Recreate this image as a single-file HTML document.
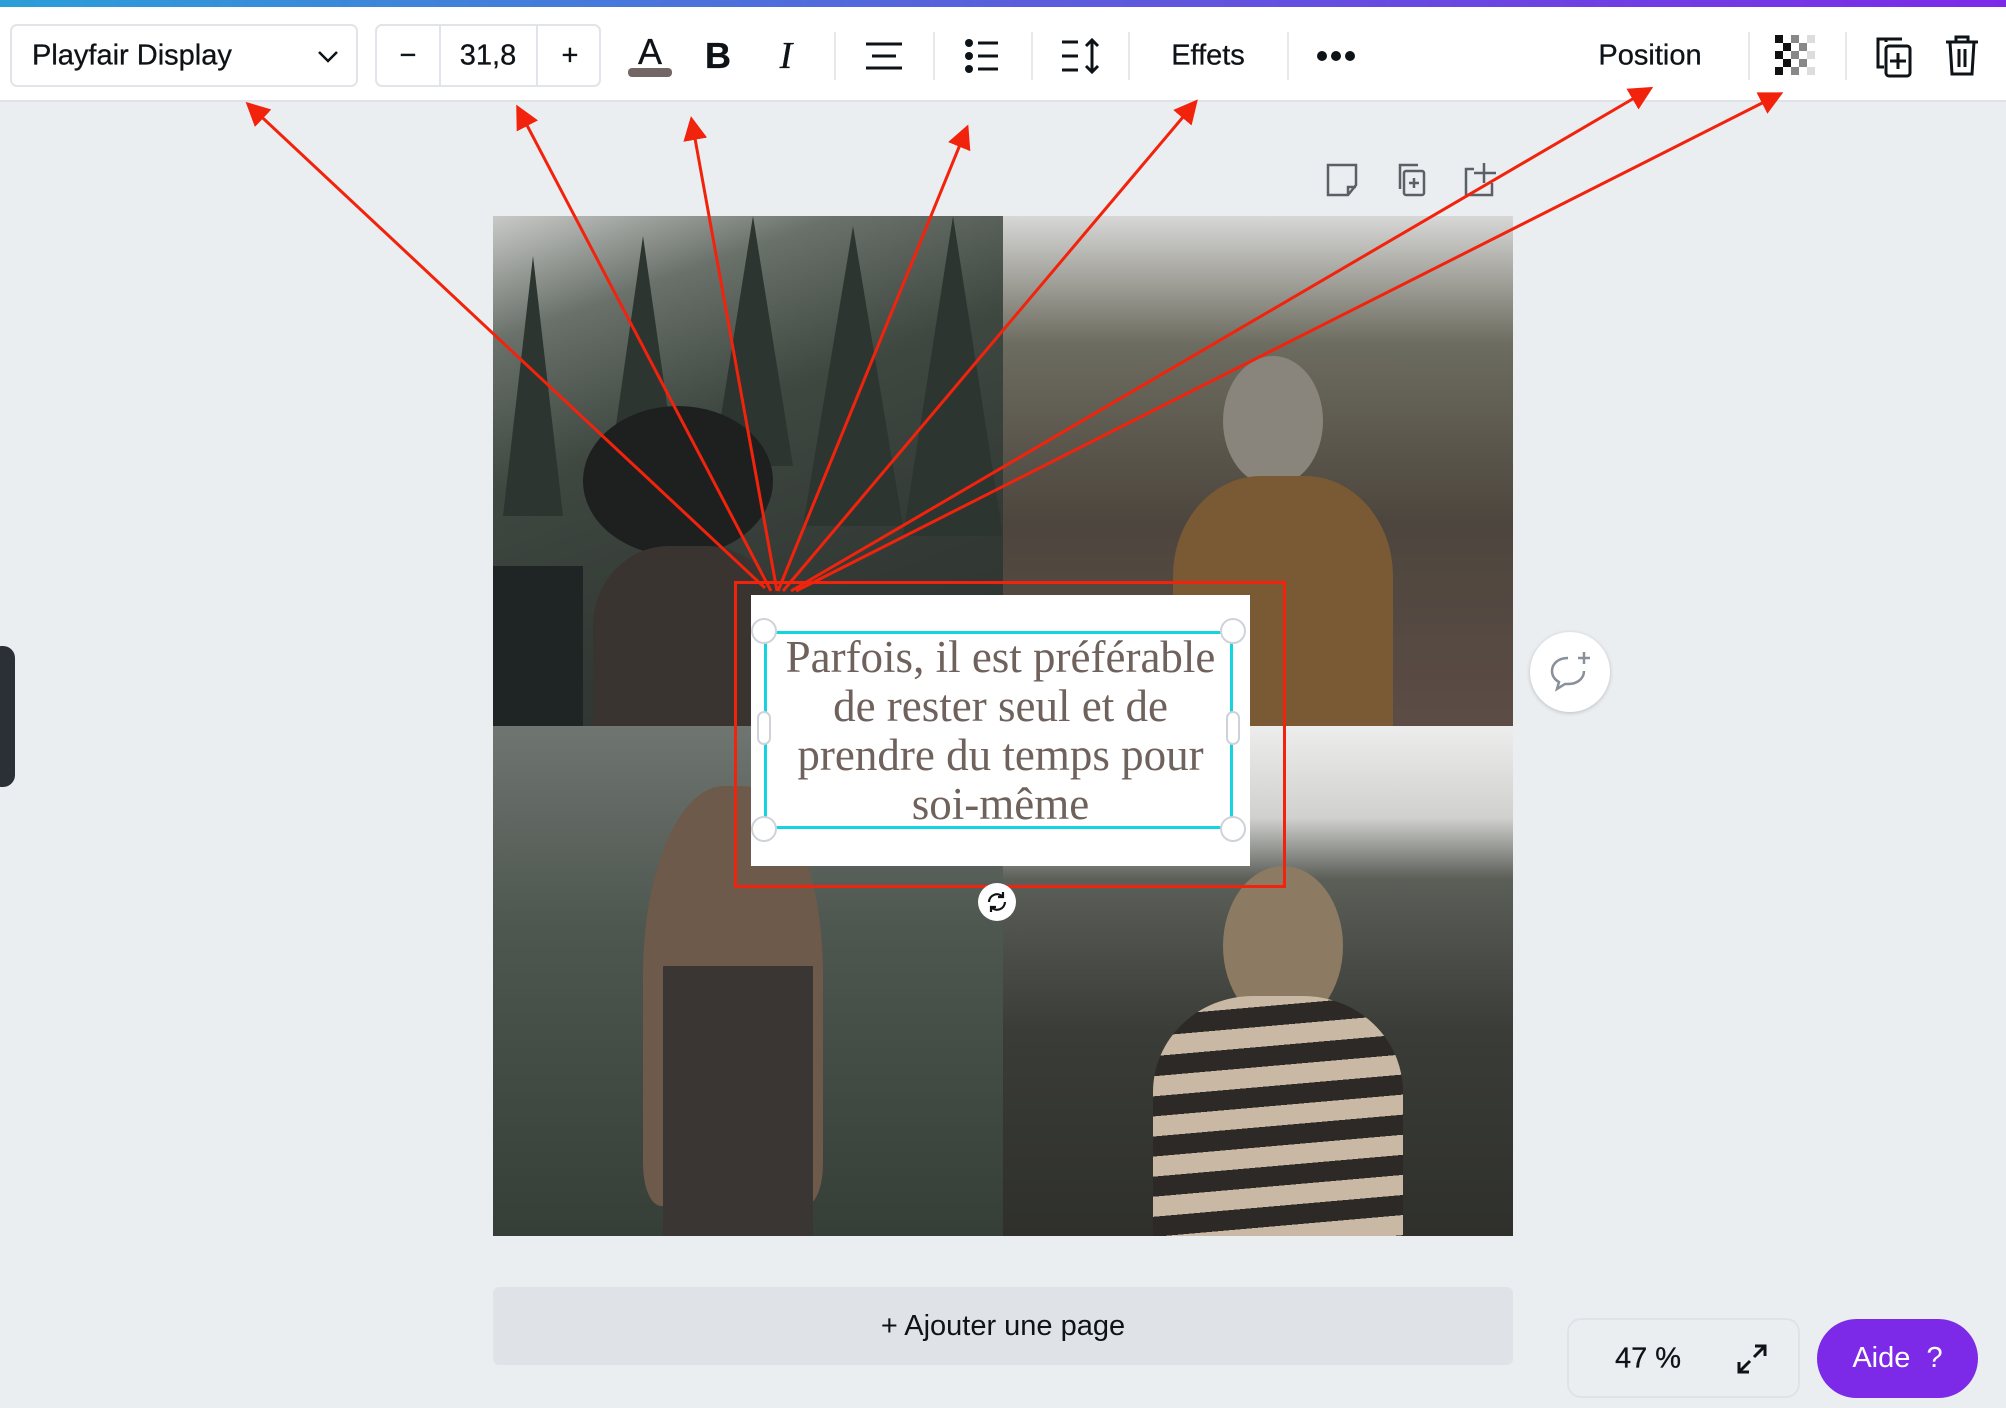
<!DOCTYPE html>
<html><head><meta charset="utf-8"><style>
*{margin:0;padding:0;box-sizing:border-box}
body{width:2006px;height:1408px;overflow:hidden;background:#ebeef1;font-family:"Liberation Sans",sans-serif;position:relative;color:#0e1318}
.abs{position:absolute}
.top{left:0;top:0;width:2006px;height:7px;background:linear-gradient(90deg,#2b9ed9,#5a5fdc 50%,#7d2ae8)}
.tb{left:0;top:7px;width:2006px;height:95px;background:#fff;border-bottom:2px solid #dfe3e8}
.t{position:absolute;font-size:29px;line-height:1;transform:translate(-50%,-50%);top:56px;white-space:nowrap;-webkit-text-stroke:0.3px #0e1318}
.sep{position:absolute;top:32px;width:2px;height:48px;background:#e6e8eb}
.box{border:2px solid #e1e4e8;border-radius:7px;background:#fff}
.q{position:absolute;width:510px;height:510px;overflow:hidden}
.h{position:absolute;width:26px;height:26px;border-radius:50%;background:#fff;border:2px solid #cfd3d9;transform:translate(-50%,-50%)}
</style></head><body>
<div class="abs top"></div>
<div class="abs tb"></div>
<div class="abs box" style="left:10px;top:24px;width:348px;height:63px"></div>
<div class="t" style="left:32px;transform:translateY(-50%)">Playfair Display</div>
<svg class="abs" style="left:316px;top:48px" width="24" height="16"><path d="M3 4l9 9 9-9" fill="none" stroke="#0e1318" stroke-width="2.5"/></svg>
<div class="abs box" style="left:375px;top:24px;width:226px;height:63px"></div>
<div class="abs" style="left:439px;top:25px;width:2px;height:61px;background:#e1e4e8"></div>
<div class="abs" style="left:536px;top:25px;width:2px;height:61px;background:#e1e4e8"></div>
<div class="t" style="left:408px">−</div>
<div class="t" style="left:488px">31,8</div>
<div class="t" style="left:570px">+</div>
<div class="t" style="left:650px;top:52px;font-size:36px">A</div>
<div class="abs" style="left:628px;top:68px;width:44px;height:9px;border-radius:4px;background:#726764"></div>
<div class="t" style="left:718px;font-weight:bold;font-size:36px">B</div>
<div class="t" style="left:786px;font-style:italic;font-family:'Liberation Serif',serif;font-size:38px">I</div>
<div class="sep" style="left:834px"></div>
<svg class="abs" style="left:864px;top:40px" width="40" height="32"><path d="M2 4h36M8 16h24M2 28h36" stroke="#0e1318" stroke-width="3"/></svg>
<div class="sep" style="left:933px"></div>
<svg class="abs" style="left:964px;top:38px" width="36" height="36"><g fill="#0e1318"><circle cx="5" cy="5" r="4"/><circle cx="5" cy="18" r="4"/><circle cx="5" cy="31" r="4"/></g><path d="M14 5h20M14 18h20M14 31h20" stroke="#0e1318" stroke-width="3"/></svg>
<div class="sep" style="left:1031px"></div>
<svg class="abs" style="left:1060px;top:37px" width="42" height="38"><path d="M2 5h16M2 19h16M2 33h16M32 3v32M26 9l6-6 6 6M26 29l6 6 6-6" fill="none" stroke="#0e1318" stroke-width="3"/></svg>
<div class="sep" style="left:1128px"></div>
<div class="t" style="left:1208px">Effets</div>
<div class="sep" style="left:1287px"></div>
<svg class="abs" style="left:1316px;top:50px" width="40" height="12"><g fill="#0e1318"><circle cx="6" cy="6" r="5"/><circle cx="20" cy="6" r="5"/><circle cx="34" cy="6" r="5"/></g></svg>
<div class="t" style="left:1650px">Position</div>
<div class="sep" style="left:1748px"></div>
<svg class="abs" style="left:1775px;top:35px" width="42" height="42"><g fill="#111"><rect x="0" y="0" width="8" height="8"/><rect x="0" y="16" width="8" height="8"/><rect x="0" y="32" width="8" height="8"/><rect x="8" y="8" width="8" height="8"/><rect x="8" y="24" width="8" height="8"/></g><g fill="#888"><rect x="16" y="0" width="8" height="8"/><rect x="16" y="16" width="8" height="8"/><rect x="16" y="32" width="8" height="8"/><rect x="24" y="8" width="8" height="8"/><rect x="24" y="24" width="8" height="8"/></g><g fill="#ddd"><rect x="32" y="0" width="8" height="8"/><rect x="32" y="16" width="8" height="8"/><rect x="32" y="32" width="8" height="8"/></g></svg>
<div class="sep" style="left:1845px"></div>
<svg class="abs" style="left:1874px;top:36px" width="40" height="42"><path d="M12 6V3h16M12 3H4v28h6" fill="none" stroke="#0e1318" stroke-width="3"/><rect x="12" y="10" width="24" height="30" rx="3" fill="none" stroke="#0e1318" stroke-width="3"/><path d="M24 17v16M16 25h16" stroke="#0e1318" stroke-width="3"/></svg>
<svg class="abs" style="left:1944px;top:34px" width="36" height="44"><path d="M2 8h32M12 8V3h12v5M6 8l2 32h20l2-32M15 15v18M21 15v18" fill="none" stroke="#0e1318" stroke-width="3"/></svg>

<svg class="abs" style="left:1324px;top:161px" width="180" height="38"><g fill="none" stroke="#5b6067" stroke-width="2.5"><path d="M4 4h28v20l-8 10H4z M24 34v-8h8"/><rect x="80" y="10" width="20" height="24" rx="2"/><path d="M76 28V4h18M90 17v10M85 22h10"/><path d="M150 8h-8v26h26V22M160 2v20M150 12h22"/></g></svg>

<div class="q" style="left:493px;top:216px;background:linear-gradient(160deg,#c9cac7 0%,#6a716b 18%,#3f4741 40%,#333a35 70%,#2c302d 100%)">
<svg class="abs" style="left:0;top:0" width="510" height="510"><g fill="#2c3530"><path d="M40 40l-30 260h60z"/><path d="M150 20l-40 280h80z"/><path d="M260 0l-40 250h80z"/><path d="M360 10l-50 300h100z"/><path d="M460 0l-50 320h100z"/></g></svg>
<div class="abs" style="left:90px;top:190px;width:190px;height:150px;border-radius:50%;background:#1e2020"></div>
<div class="abs" style="left:100px;top:330px;width:190px;height:200px;border-radius:40% 40% 0 0;background:#3a3430"></div>
<div class="abs" style="left:0;top:350px;width:90px;height:160px;background:#1f2524"></div></div>
<div class="q" style="left:1003px;top:216px;background:linear-gradient(180deg,#d7d7d6 0%,#6d6c60 25%,#4d463e 60%,#5c4c45 100%)">
<div class="abs" style="left:220px;top:140px;width:100px;height:130px;border-radius:50%;background:#8a857c"></div>
<div class="abs" style="left:170px;top:260px;width:220px;height:250px;border-radius:40% 40% 0 0;background:#7a5a34"></div></div>
<div class="q" style="left:493px;top:726px;background:linear-gradient(180deg,#6f7570 0%,#4e5650 40%,#363e38 100%)">
<div class="abs" style="left:150px;top:60px;width:180px;height:420px;border-radius:45% 45% 10% 10%;background:#6e5a4a"></div>
<div class="abs" style="left:170px;top:240px;width:150px;height:270px;background:#3a3634"></div></div>
<div class="q" style="left:1003px;top:726px;background:linear-gradient(180deg,#ededed 0%,#d0d0ce 18%,#5b5f58 30%,#3a3c37 60%,#2f302c 100%)">
<div class="abs" style="left:220px;top:140px;width:120px;height:160px;border-radius:50%;background:#8d7a63"></div>
<div class="abs" style="left:150px;top:270px;width:250px;height:240px;border-radius:40% 40% 0 0;background:repeating-linear-gradient(175deg,#c8b8a4 0 20px,#2d2926 20px 40px)"></div></div>

<div class="abs" style="left:751px;top:595px;width:499px;height:271px;background:#fff"></div>
<div class="abs" style="left:764px;top:631px;width:469px;height:198px;border:3px solid #14d4e0"></div>
<div class="abs" style="left:751px;top:633px;width:499px;text-align:center;font-family:'Liberation Serif',serif;font-size:45px;line-height:49px;color:#6f625d">Parfois, il est préférable<br>de rester seul et de<br>prendre du temps pour<br>soi-même</div>
<div class="h" style="left:764px;top:631px"></div><div class="h" style="left:1233px;top:631px"></div>
<div class="h" style="left:764px;top:829px"></div><div class="h" style="left:1233px;top:829px"></div>
<div class="abs" style="left:757px;top:711px;width:14px;height:34px;border-radius:7px;background:#fff;border:2px solid #cfd3d9"></div>
<div class="abs" style="left:1226px;top:711px;width:14px;height:34px;border-radius:7px;background:#fff;border:2px solid #cfd3d9"></div>
<div class="abs" style="left:734px;top:581px;width:552px;height:307px;border:3px solid #f2230c"></div>
<div class="abs" style="left:978px;top:883px;width:38px;height:38px;border-radius:50%;background:#fff"></div>
<svg class="abs" style="left:985px;top:890px" width="24" height="24"><path d="M4 12a8 8 0 0 1 14-5M20 12a8 8 0 0 1-14 5M18 2v5h-5M6 22v-5h5" fill="none" stroke="#111" stroke-width="2.2"/></svg>

<div class="abs" style="left:1530px;top:632px;width:80px;height:80px;border-radius:50%;background:#fff;box-shadow:0 1px 4px rgba(0,0,0,.2)"></div>
<svg class="abs" style="left:1548px;top:650px" width="46" height="44"><path d="M20 8C10 8 4 14 4 21c0 5 3 9 7 11l-2 7 8-5c1 0 2 0 3 0 10 0 16-6 16-13" fill="none" stroke="#8a9099" stroke-width="2.5"/><path d="M36 2v12M30 8h12" stroke="#8a9099" stroke-width="2.5"/></svg>
<div class="abs" style="left:-10px;top:646px;width:25px;height:141px;border-radius:12px;background:#2b3036"></div>

<div class="abs" style="left:493px;top:1287px;width:1020px;height:78px;background:#dfe3e8;border-radius:6px;text-align:center;font-size:29px;line-height:78px">+ Ajouter une page</div>
<div class="abs" style="left:1567px;top:1318px;width:233px;height:80px;border:2px solid #dfe3e8;border-radius:14px"></div>
<div class="t" style="left:1648px;top:1359px">47 %</div>
<svg class="abs" style="left:1735px;top:1342px" width="34" height="34"><path d="M4 30l11-11M4 20v10h10M30 4L19 15M20 4h10v10" fill="none" stroke="#0e1318" stroke-width="3"/></svg>
<div class="abs" style="left:1817px;top:1319px;width:161px;height:79px;border-radius:40px;background:#7d2ae8;color:#fff;font-size:29px;line-height:79px;text-align:center">Aide&nbsp; ?</div>

<svg class="abs" style="left:0;top:0" width="2006" height="1408">
<defs><marker id="a" markerWidth="8" markerHeight="8" refX="6" refY="4" orient="auto" markerUnits="strokeWidth"><path d="M0 0L8 4L0 8z" fill="#f2230c"/></marker></defs>
<g stroke="#f2230c" stroke-width="3" fill="none" marker-end="url(#a)">
<line x1="765" y1="588" x2="250" y2="106"/>
<line x1="771" y1="591" x2="519" y2="110"/>
<line x1="777" y1="591" x2="692" y2="122"/>
<line x1="778" y1="591" x2="966" y2="130"/>
<line x1="783" y1="591" x2="1194" y2="104"/>
<line x1="791" y1="591" x2="1648" y2="90"/>
<line x1="796" y1="591" x2="1778" y2="95"/>
</g></svg>
</body></html>
